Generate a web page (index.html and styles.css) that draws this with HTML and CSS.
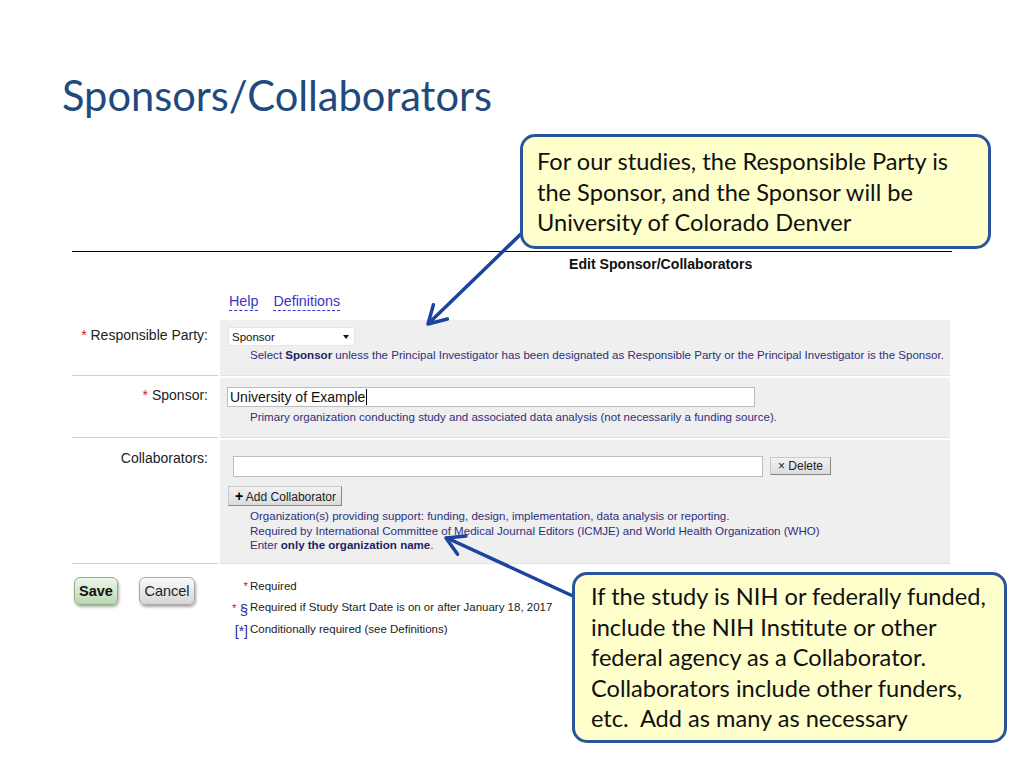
FILE: index.html
```html
<!DOCTYPE html>
<html>
<head>
<meta charset="utf-8">
<link rel="stylesheet" href="styles.css">
</head>
<body>
<div class="slide">
  <h1 class="title">Sponsors/Collaborators</h1>

  <div class="form">
    <div class="form-head">Edit Sponsor/Collaborators</div>
    <div class="links"><a class="dlink">Help</a><a class="dlink">Definitions</a></div>

    <div class="row">
      <div class="label r1"><span class="req">*</span> Responsible Party:</div>
      <div class="panel p1">
        <div class="select"><span>Sponsor</span><span class="caret">&#9660;</span></div>
        <div class="hint">Select <b>Sponsor</b> unless the Principal Investigator has been designated as Responsible Party or the Principal Investigator is the Sponsor.</div>
      </div>
    </div>

    <div class="row">
      <div class="label r2"><span class="req">*</span> Sponsor:</div>
      <div class="panel p2">
        <div class="text-input wide">University of Example<span class="cursor"></span></div>
        <div class="hint">Primary organization conducting study and associated data analysis (not necessarily a funding source).</div>
      </div>
    </div>

    <div class="row">
      <div class="label r3">Collaborators:</div>
      <div class="panel p3">
        <div class="collab-line">
          <div class="text-input collab"></div>
          <div class="btn-small">&#215; Delete</div>
        </div>
        <div class="btn-small add"><span class="plus">+</span> Add Collaborator</div>
        <div class="hint multi">Organization(s) providing support: funding, design, implementation, data analysis or reporting.<br>Required by International Committee of Medical Journal Editors (ICMJE) and World Health Organization (WHO)<br>Enter <b>only the organization name</b>.</div>
      </div>
    </div>

    <div class="bottom">
      <div class="actions">
        <div class="btn save">Save</div>
        <div class="btn cancel">Cancel</div>
      </div>
      <div class="legend">
        <div class="mk"><span class="req">*</span></div><div class="lt">Required</div>
        <div class="mk"><span class="req">*</span> <span class="sect">&#167;</span></div><div class="lt">Required if Study Start Date is on or after January 18, 2017</div>
        <div class="mk"><span class="cond">[*]</span></div><div class="lt">Conditionally required (see Definitions)</div>
      </div>
    </div>
  </div>

  <svg class="arrows" width="1024" height="768" viewBox="0 0 1024 768">
    <g fill="none" stroke="#1a44a0" stroke-width="3.5" stroke-linecap="round" stroke-linejoin="round">
      <line x1="524" y1="231" x2="429" y2="323"/>
      <polyline points="447.4,319 428,324 433.4,304.7"/>
      <line x1="575" y1="597" x2="447" y2="538"/>
      <polyline points="457.6,554.3 446,538 465.9,536.1"/>
    </g>
  </svg>

  <div class="callout c1">For our studies, the Responsible Party is<br>the Sponsor, and the Sponsor will be<br>University of Colorado Denver</div>
  <div class="callout c2">If the study is NIH or federally funded,<br>include the NIH Institute or other<br>federal agency as a Collaborator.<br>Collaborators include other funders,<br>etc.&nbsp; Add as many as necessary</div>
</div>
</body>
</html>
```

FILE: styles.css
```css
* { box-sizing: border-box; }
html, body { margin: 0; padding: 0; background: #fff; }
.slide {
  position: relative;
  width: 1024px;
  height: 768px;
  overflow: hidden;
  background: #fff;
  font-family: "Liberation Sans", Arial, sans-serif;
}
.title {
  margin: 0;
  padding: 70px 0 0 62px;
  height: 251px;
  font-family: Lato, "Open Sans", sans-serif;
  font-weight: normal;
  font-size: 41.6px;
  line-height: 50px;
  color: #1f4a7c;
}
.form {
  margin-left: 72px;
  width: 880px;
  border-top: 1px solid #000;
}
.form-head {
  padding: 4px 0 0 497px;
  font-size: 14.1px;
  font-weight: bold;
  line-height: 17px;
  height: 41px;
  color: #111;
}
.links {
  padding-left: 157px;
  height: 27px;
  display: flex;
  gap: 15px;
  font-size: 14.3px;
  line-height: 16px;
}
.dlink {
  color: #3535c8;
  border-bottom: 1px dashed #3535c8;
  padding-bottom: 1px;
  height: 18px;
}
.row {
  display: grid;
  grid-template-columns: 146px 730px;
  column-gap: 2px;
  margin-bottom: 2px;
}
.label {
  text-align: right;
  padding-right: 10px;
  font-size: 14px;
  line-height: 16px;
  color: #222;
  border-bottom: 1px solid #cfcfcf;
}
.r1 { padding-top: 7px; }
.r2 { padding-top: 9px; }
.r3 { padding-top: 10px; }
.req { color: #cc2222; }
.panel {
  background: #efefef;
  border-bottom: 1px solid #e2e2e2;
}
.p1 { height: 56px; padding: 7px 0 0 8px; }
.p2 { height: 60px; padding: 9px 0 0 7px; }
.p3 { height: 124px; padding: 16px 0 0 8px; }
.select {
  width: 127px;
  height: 19px;
  background: #fff;
  border: 1px solid #e4e4e4;
  display: flex;
  justify-content: space-between;
  align-items: center;
  padding: 0 3px 0 3px;
  font-size: 11.5px;
  color: #111;
}
.caret { font-size: 10px; color: #111; transform: scaleY(0.7); }
.hint {
  margin: 2px 0 0 22px;
  font-size: 11.55px;
  line-height: 14px;
  color: #2e2e7e;
  white-space: nowrap;
}
.p2 .hint { margin: 3px 0 0 23px; }
.hint b { color: #1e1e60; }
.hint.multi { margin: 3px 0 0 22px; line-height: 14.5px; }
.text-input {
  background: #fff;
  border: 1px solid #bdbdbd;
  height: 20px;
  font-size: 14px;
  line-height: 18px;
  padding-left: 2px;
  color: #111;
  display: flex;
  align-items: center;
}
.wide { width: 528px; }
.cursor { display: inline-block; width: 1px; height: 16px; background: #000; margin-left: 1px; }
.collab-line { display: flex; gap: 7px; align-items: flex-start; padding-left: 5px; }
.collab { width: 530px; height: 21px; }
.btn-small {
  height: 18px;
  padding: 0 7px;
  background: linear-gradient(#f2f2f2, #dcdcdc);
  border: 1px solid #c8c8c8;
  border-right-color: #888;
  border-bottom-color: #888;
  font-size: 12px;
  line-height: 16px;
  color: #222;
  margin-top: 1px;
  white-space: nowrap;
}
.btn-small.add {
  display: inline-block;
  width: 114px;
  height: 20px;
  line-height: 18px;
  margin-top: 9px;
  padding: 0 0 0 6px;
}
.plus { font-weight: bold; font-size: 14px; color: #000; }
.bottom {
  display: grid;
  grid-template-columns: 146px 730px;
  column-gap: 2px;
  padding-top: 11px;
}
.actions { display: flex; gap: 21px; padding-left: 2px; }
.btn {
  height: 28px;
  border-radius: 6px;
  font-size: 14.5px;
  line-height: 26px;
  text-align: center;
  box-shadow: 1px 2px 3px rgba(0,0,0,0.35);
}
.save {
  width: 44px;
  font-weight: bold;
  color: #111;
  background: linear-gradient(#eef7ea, #b9d6b0);
  border: 1px solid #8fb087;
}
.cancel {
  width: 56px;
  color: #222;
  background: linear-gradient(#fafafa, #d6d6d6);
  border: 1px solid #a9a9a9;
}
.legend {
  display: grid;
  grid-template-columns: 30px auto;
  row-gap: 6.5px;
  font-size: 11.5px;
  line-height: 14.5px;
  color: #222;
  padding-top: 2px;
}
.mk { text-align: right; padding-right: 2px; white-space: nowrap; }
.sect { color: #2b2ba0; font-size: 15px; line-height: 14px; position: relative; top: 3px; }
.cond { color: #2b2ba0; font-size: 14px; position: relative; top: 2px; }
.arrows { position: absolute; left: 0; top: 0; pointer-events: none; }
.callout {
  position: absolute;
  background: #ffffcc;
  border: 3px solid #2b559a;
  border-radius: 15px;
  font-family: Lato, "Open Sans", sans-serif;
  font-size: 23.6px;
  line-height: 30.5px;
  color: #111;
  white-space: nowrap;
}
.c1 { left: 520px; top: 134px; width: 471px; height: 115px; padding: 9px 0 0 14px; }
.c2 { left: 572px; top: 572px; width: 435px; height: 171px; padding: 6px 0 0 16px; }
```
